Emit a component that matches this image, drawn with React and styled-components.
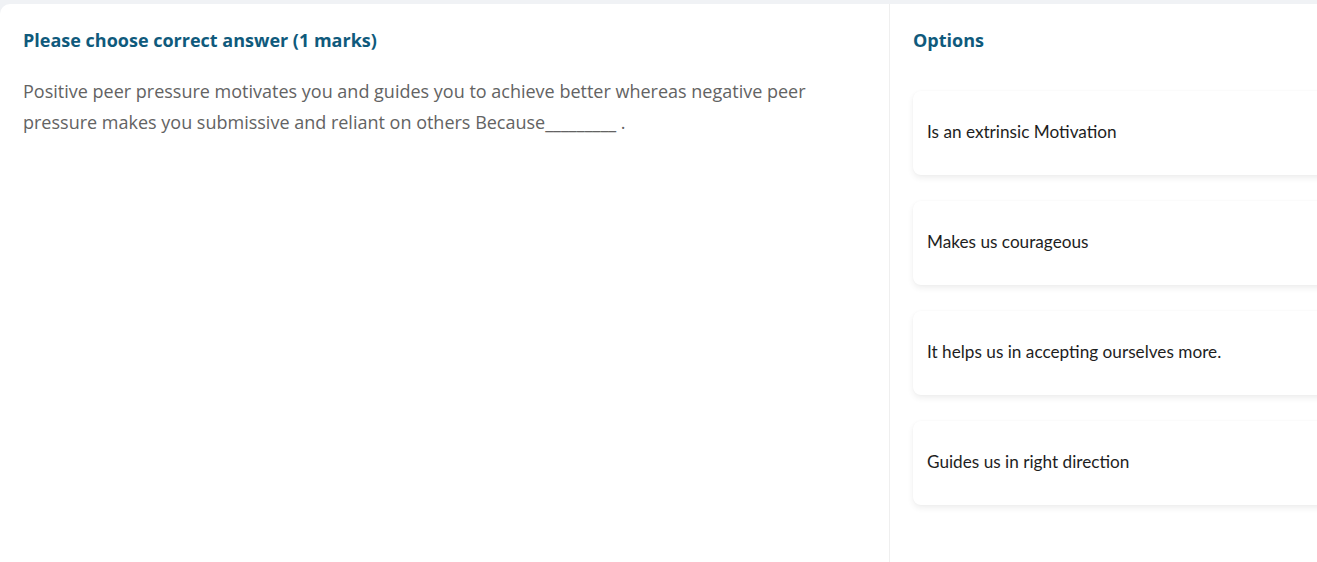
import React from 'react'
import styled, { createGlobalStyle } from 'styled-components';

const GlobalStyle = createGlobalStyle`
    html, body {
        margin: 0;
        padding: 0;
        background: #f0f2f5;
    }
    * {
        box-sizing: border-box;
    }
`;

const options = [
    { id: 1, title: "Is an extrinsic Motivation" },
    { id: 2, title: "Makes us courageous" },
    { id: 3, title: "It helps us in accepting ourselves more." },
    { id: 4, title: "Guides us in right direction" },
];

function App() {
    return (
        <>
            <GlobalStyle />
            <Page>
                <Panel>
                    <QuestionColumn>
                        <Heading>Please choose correct answer (1 marks)</Heading>
                        <Question>
                            Positive peer pressure motivates you and guides you to achieve better whereas negative peer pressure makes you submissive and reliant on others Because_________ .
                        </Question>
                    </QuestionColumn>
                    <OptionsColumn>
                        <Heading>Options</Heading>
                        <OptionList>
                            {options.map((option) => (
                                <OptionCard key={option.id}>{option.title}</OptionCard>
                            ))}
                        </OptionList>
                    </OptionsColumn>
                </Panel>
            </Page>
        </>
    )
}

export default App;

const Page = styled.div`
    padding-top: 4px;
    height: 562px;
    overflow: hidden;
`;
const Panel = styled.div`
    display: flex;
    background: #fff;
    border-radius: 10px 0 0 0;
    min-height: 558px;
    width: 1340px;
`;
const QuestionColumn = styled.div`
    width: 889px;
    flex-shrink: 0;
    padding: 24px 23px;
`;
const OptionsColumn = styled.div`
    flex: 1;
    border-left: 1px solid #efefef;
    padding: 24px 0 0 23px;
`;
const Heading = styled.h3`
    margin: 0;
    font-family: "Open Sans", sans-serif;
    font-size: 18px;
    font-weight: 700;
    line-height: 24px;
    color: #0f5a7c;
`;
const Question = styled.p`
    margin: 24px 0 0;
    font-family: "Open Sans", sans-serif;
    font-size: 18px;
    line-height: 31px;
    color: #636363;
`;
const OptionList = styled.div`
    display: flex;
    flex-direction: column;
    gap: 26px;
    margin-top: 39px;
`;
const OptionCard = styled.div`
    display: flex;
    align-items: center;
    height: 84px;
    padding: 0 14px 4px;
    background: #fff;
    border-radius: 8px;
    box-shadow: 0 3px 6px rgba(0, 0, 0, 0.07), 0 0 2px rgba(0, 0, 0, 0.03);
    font-family: "Lato", sans-serif;
    font-size: 17.2px;
    color: #1e1e1e;
`;
